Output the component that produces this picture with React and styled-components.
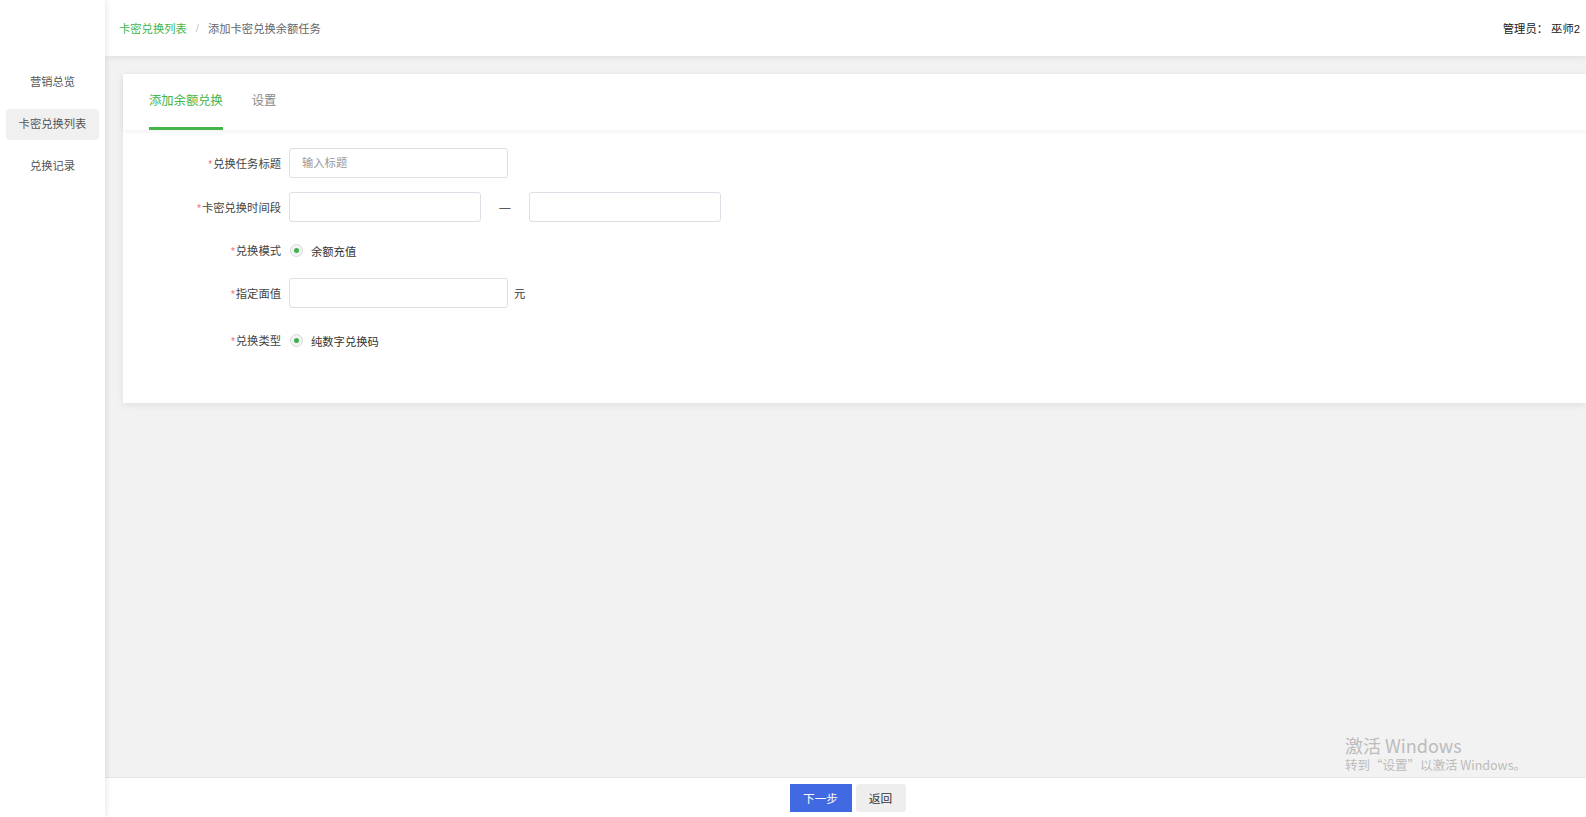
import React from 'react';
import styled, { createGlobalStyle } from 'styled-components';

const GlobalStyle = createGlobalStyle`
  html, body {
    margin: 0;
    padding: 0;
    overflow: hidden;
  }
  body {
    font-family: "Liberation Sans", "Noto Sans CJK SC", sans-serif;
    font-size: 11.3px;
    color: #444;
    background: #f2f2f2;
  }
  * {
    box-sizing: border-box;
  }
`;

const menu = ['营销总览', '卡密兑换列表', '兑换记录'];

const App = () => {
  return (
    <Page>
      <GlobalStyle />
      <Sidebar>
        {menu.map((item, i) => (
          <MenuItem key={item} active={i === 1}>
            {item}
          </MenuItem>
        ))}
      </Sidebar>
      <Right>
        <Header>
          <Breadcrumb>
            <Crumb link>卡密兑换列表</Crumb>
            <Sep>/</Sep>
            <Crumb>添加卡密兑换余额任务</Crumb>
          </Breadcrumb>
          <Admin>管理员：&nbsp;巫师2</Admin>
        </Header>
        <Main>
          <Card>
            <Tabs>
              <Tab active>添加余额兑换</Tab>
              <Tab>设置</Tab>
            </Tabs>
            <Form>
              <Row>
                <Label>兑换任务标题</Label>
                <Input width="219px" placeholder="输入标题" />
              </Row>
              <Row>
                <Label>卡密兑换时间段</Label>
                <Input width="192px" />
                <Dash>—</Dash>
                <Input width="192px" />
              </Row>
              <Row short>
                <Label>兑换模式</Label>
                <Radio />
                <RadioText>余额充值</RadioText>
              </Row>
              <Row>
                <Label>指定面值</Label>
                <Input width="219px" />
                <Unit>元</Unit>
              </Row>
              <Row short extra>
                <Label>兑换类型</Label>
                <Radio />
                <RadioText>纯数字兑换码</RadioText>
              </Row>
            </Form>
          </Card>
        </Main>
        <Footer>
          <Button primary>下一步</Button>
          <Button>返回</Button>
        </Footer>
        <Watermark>
          <WmTitle>激活 Windows</WmTitle>
          <WmSub>转到“设置”以激活 Windows。</WmSub>
        </Watermark>
      </Right>
    </Page>
  );
};

export default App;

const Page = styled.div`
  display: flex;
  width: 100vw;
  height: 817px;
  overflow: hidden;
`;

const Sidebar = styled.div`
  width: 105px;
  flex-shrink: 0;
  background: #fff;
  padding: 67px 6px 0 6px;
  display: flex;
  flex-direction: column;
  gap: 11px;
  box-shadow: 2px 0 5px rgba(0, 0, 0, 0.08);
  position: relative;
  z-index: 3;
`;

const MenuItem = styled.div`
  height: 31px;
  line-height: 31px;
  text-align: center;
  border-radius: 4px;
  color: #555;
  background: ${(p) => (p.active ? '#f0f0f0' : 'transparent')};
`;

const Right = styled.div`
  flex: 1;
  display: flex;
  flex-direction: column;
  position: relative;
  min-width: 0;
`;

const Header = styled.div`
  height: 56px;
  flex-shrink: 0;
  background: #fff;
  display: flex;
  align-items: center;
  justify-content: space-between;
  padding: 0 6px 0 14px;
  box-shadow: 0 2px 6px rgba(0, 0, 0, 0.07);
  position: relative;
  z-index: 2;
`;

const Breadcrumb = styled.div`
  display: flex;
  align-items: center;
`;

const Crumb = styled.span`
  color: ${(p) => (p.link ? '#44b549' : '#666')};
`;

const Sep = styled.span`
  color: #c0c4cc;
  margin: 0 9px;
`;

const Admin = styled.div`
  color: #222;
`;

const Main = styled.div`
  flex: 1;
  padding: 18px 0 0 18px;
  background: #f2f2f2;
`;

const Card = styled.div`
  background: #fff;
  height: 329px;
  box-shadow: 0 2px 8px rgba(0, 0, 0, 0.08);
`;

const Tabs = styled.div`
  height: 56px;
  display: flex;
  gap: 29px;
  padding-left: 26px;
  box-shadow: 0 2px 5px rgba(0, 0, 0, 0.06);
`;

const Tab = styled.div`
  height: 56px;
  line-height: 55px;
  font-size: 12.3px;
  color: ${(p) => (p.active ? '#44b549' : '#888')};
  border-bottom: 3px solid ${(p) => (p.active ? '#44b549' : 'transparent')};
`;

const Form = styled.div`
  padding-top: 18px;
  display: flex;
  flex-direction: column;
  gap: 14px;
`;

const Row = styled.div`
  display: flex;
  align-items: center;
  height: ${(p) => (p.short ? '28px' : '30px')};
  margin-top: ${(p) => (p.extra ? '4px' : '0')};
`;

const Label = styled.div`
  width: 158px;
  text-align: right;
  margin-right: 8px;
  color: #444;
  &::before {
    content: '*';
    color: #f56c6c;
    font-size: 10px;
    margin-right: 1px;
  }
`;

const Input = styled.input`
  width: ${(p) => p.width};
  height: 30px;
  border: 1px solid #dcdfe6;
  border-radius: 3px;
  padding: 0 12px;
  font-family: inherit;
  font-size: 11.3px;
  color: #333;
  outline: none;
  &::placeholder {
    color: #999;
  }
`;

const Dash = styled.span`
  width: 48px;
  text-align: center;
  color: #333;
`;

const Unit = styled.span`
  margin-left: 6px;
  color: #333;
`;

const Radio = styled.span`
  width: 13px;
  height: 13px;
  margin-left: 1px;
  border-radius: 50%;
  border: 1px solid #d5d8dd;
  background: #f3f4f6;
  display: flex;
  align-items: center;
  justify-content: center;
  &::after {
    content: '';
    width: 5px;
    height: 5px;
    border-radius: 50%;
    background: #3bb34a;
  }
`;

const RadioText = styled.span`
  margin-left: 8px;
  color: #333;
  padding-top: 2px;
`;

const Footer = styled.div`
  height: 40px;
  flex-shrink: 0;
  background: #fff;
  border-top: 1px solid #e4e4e4;
  display: flex;
  align-items: center;
  justify-content: center;
  gap: 4px;
  padding-left: 4px;
  position: relative;
  z-index: 1;
`;

const Button = styled.button`
  height: 28px;
  width: ${(p) => (p.primary ? '62px' : '50px')};
  border: none;
  border-radius: ${(p) => (p.primary ? '0' : '3px')};
  background: ${(p) => (p.primary ? '#4169e1' : '#eeeeee')};
  color: ${(p) => (p.primary ? '#fff' : '#333')};
  font-family: inherit;
  font-size: 11.7px;
  cursor: pointer;
`;

const Watermark = styled.div`
  position: absolute;
  left: 1240px;
  bottom: 43px;
  color: #bcbcbc;
  pointer-events: none;
  z-index: 5;
`;

const WmTitle = styled.div`
  font-family: "Noto Sans CJK SC", sans-serif;
  font-size: 18px;
  line-height: 21px;
`;

const WmSub = styled.div`
  font-family: "Noto Sans CJK SC", sans-serif;
  font-size: 12.5px;
  line-height: 18px;
`;
